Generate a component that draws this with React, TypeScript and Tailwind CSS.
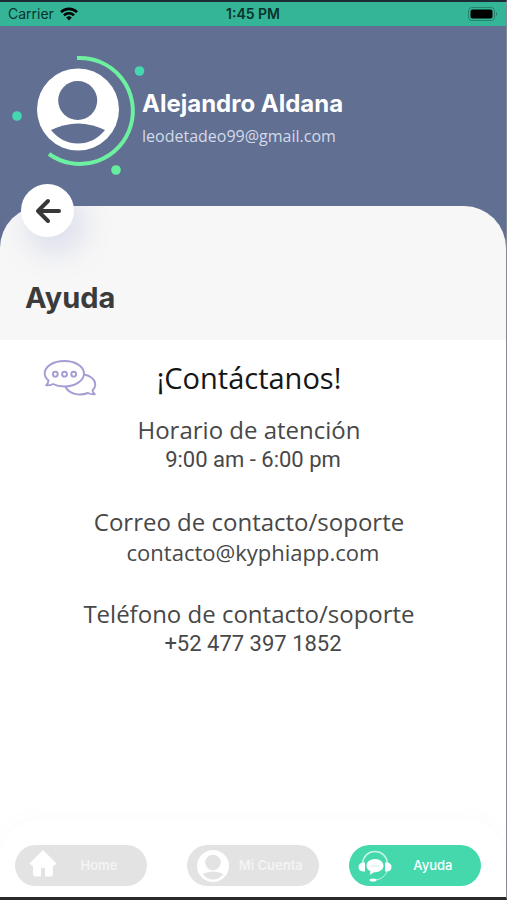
import type { ReactNode } from "react";

type ContactEntry = { label: string; value: string; href?: string; className: string };

const entries: ContactEntry[] = [
  {
    label: "Horario de atención",
    value: "9:00 am - 6:00 pm",
    className: "font-[Roboto,sans-serif]",
  },
  {
    label: "Correo de contacto/soporte",
    value: "contacto@kyphiapp.com",
    href: "mailto:contacto@kyphiapp.com",
    className: "font-['Open_Sans',sans-serif]",
  },
  {
    label: "Teléfono de contacto/soporte",
    value: "+52 477 397 1852",
    href: "tel:+524773971852",
    className: "font-[Roboto,sans-serif]",
  },
];

function StatusBar() {
  return (
    <div className="grid h-6 grid-cols-3 items-center bg-[#35b597] px-2 text-sm text-[#08332c]">
      <div className="flex items-center gap-1.5">
        <span>Carrier</span>
        <svg width="18" height="14" viewBox="0 0 18 14" fill="none" stroke="#000" strokeWidth="2.6">
          <path d="M1 5.2a11.3 11.3 0 0 1 16 0" />
          <path d="M4 8.4a7 7 0 0 1 10 0" />
          <path d="M9 13.4 6.2 10.6a4 4 0 0 1 5.6 0Z" fill="#000" stroke="none" />
        </svg>
      </div>
      <span className="text-center font-semibold">1:45 PM</span>
      <svg className="justify-self-end" width="30" height="14" viewBox="0 0 30 14">
        <rect x="0.5" y="0.5" width="26" height="13" rx="3.5" fill="none" stroke="#26836e" />
        <rect x="2.5" y="2.5" width="22" height="9" rx="2" fill="#000" />
        <path d="M28 5v4c1.6-.6 1.6-3.4 0-4Z" fill="#26836e" />
      </svg>
    </div>
  );
}

function Avatar() {
  return (
    <svg className="shrink-0 overflow-visible" width="126" height="128" viewBox="12 50 126 128">
      <path d="M77 58A53 53 0 1 1 49 154" fill="none" stroke="#6df0a0" strokeWidth="4" />
      <circle cx="78" cy="109.5" r="41" fill="#fff" />
      <circle cx="77.7" cy="100.5" r="19.5" fill="#617092" />
      <path d="M51 130Q78 117 105 130Q94 143.500 78 143.500T51 130Z" fill="#617092" />
      <circle cx="139.500" cy="71" r="4.800" fill="#45d8b0" />
      <circle cx="17" cy="116" r="4.800" fill="#45d8b0" />
      <circle cx="116" cy="170" r="4.800" fill="#66ee9f" />
    </svg>
  );
}

function ChatIcon() {
  return (
    <svg
      width="54"
      height="38"
      viewBox="43 358 54 38"
      fill="none"
      stroke="#a69bd3"
      strokeWidth="1.9"
      strokeLinejoin="round"
    >
      <path d="M48.500 379.500C46 377.500 44.700 375 44.700 372.500C44.700 365.500 53.300 360 64.300 360S84 365.500 84 372.500S75.300 385.500 64.300 385.500C59.800 385.500 56 384.600 53 383C51 384.100 48.500 384.600 46.200 384.300C47.600 383 48.300 381.300 48.500 379.500Z" />
      <path d="M84 373.500C90.500 374.500 95.300 378.800 95.300 383.500C95.300 385.700 94.300 387.800 92.500 389.500C92.600 391 93.500 392.200 94.700 393.300C92.200 393.500 90 393 88 392C79.500 395.300 68.500 393 65.500 385.700" />
      <circle cx="55.300" cy="373.200" r="2.400" />
      <circle cx="64.500" cy="373.200" r="2.400" />
      <circle cx="73.700" cy="373.200" r="2.400" />
    </svg>
  );
}

function HomeIcon() {
  return (
    <svg className="mb-1.5 ml-1" width="28" height="28" viewBox="0 0 28 28" fill="#fff">
      <path d="M14 1.500 27 14.500 25 16.500 23.500 15.500V25.500Q23.500 27 22 27H16.500V20Q16.500 18 14 18T11.500 20V27H6Q4.500 27 4.500 25.500V15.500L3 16.500 1 14.500Z" stroke="#fff" strokeLinejoin="round" />
    </svg>
  );
}

function AccountIcon() {
  return (
    <svg width="32" height="32" viewBox="0 0 32 32">
      <circle cx="16" cy="16" r="16" fill="#fff" />
      <circle cx="16" cy="12.500" r="7.800" fill="#e3e3e3" />
      <path d="M5.500 24Q16 19 26.500 24Q22 29.500 16 29.500T5.500 24Z" fill="#e3e3e3" />
    </svg>
  );
}

function SupportIcon() {
  return (
    <svg width="34" height="32" viewBox="0 0 34 32" fill="#fff">
      <path d="M4.500 13C5.500 6 10.500 1.500 17 1.500S28.500 6 29.500 13" fill="none" stroke="#c5f4e4" strokeWidth="1.500" />
      <path d="M29 21C27.500 26 23 29.500 17 30" fill="none" stroke="#c5f4e4" />
      <path d="M7 12.500v9H5q-4.500-.5-4.500-4.500T5 12.500ZM27 12.500v9h2q4.500-.5 4.500-4.500T29 12.500Z" />
      <path d="M17 9c-5 0-8.500 3-8.500 6.800 0 2.500 1.600 4.500 4 5.500l-.8 3.500 4.500-2.600c5.200.3 9.300-2.500 9.300-6.400C25.500 12 22 9 17 9Z" />
      <path d="M12.500 16h9" stroke="#a5ebd4" strokeDasharray="1.500 1" fill="none" />
      <ellipse cx="15" cy="30" rx="3.500" ry="1.500" />
    </svg>
  );
}

function NavButton({ icon, label, active = false }: { icon: ReactNode; label: string; active?: boolean }) {
  return (
    <button
      type="button"
      aria-current={active ? "page" : undefined}
      className={`flex h-[41px] w-[132px] items-center rounded-full px-2 text-[13px] ${
        active ? "bg-[#45d8ad] font-medium text-white" : "bg-[#e3e3e3] font-semibold text-[#f4f4f4]"
      }`}
    >
      <span className="flex w-9 shrink-0 justify-center">{icon}</span>
      <span className="flex-1 text-center whitespace-nowrap">{label}</span>
    </button>
  );
}

export default function App() {
  return (
    <div className="flex min-h-screen flex-col border-t-2 border-r border-b-3 border-t-[#1d2b36] border-r-[#858b95] border-b-[#2b2b2b] bg-white font-[Inter,sans-serif]">
      <StatusBar />

      <header className="bg-[#617092]">
        <div className="flex items-center gap-1 px-3 pt-6 pb-7">
          <Avatar />
          <div className="min-w-0 pt-3">
            <p className="text-2xl leading-8 font-bold text-white">Alejandro Aldana</p>
            <p className="font-['Open_Sans',sans-serif] text-base leading-8 text-[#d3dae9]">
              leodetadeo99@gmail.com
            </p>
          </div>
        </div>

        {/* Title sheet, back button sits over its top edge */}
        <div className="relative rounded-t-[42px] bg-[#f7f7f7] px-[25px] pt-[74px] pb-6">
          <button
            type="button"
            aria-label="Volver"
            className="absolute -top-[22px] left-[21px] flex size-[53px] items-center justify-center rounded-full bg-white shadow-[8px_14px_32px_rgba(98,112,190,0.22)]"
          >
            <svg width="26" height="26" viewBox="0 0 26 26" fill="none" stroke="#383838" strokeWidth="4" strokeLinecap="round" strokeLinejoin="round">
              <path d="M13 3 3 13l10 10M3.500 13H24" />
            </svg>
          </button>
          <h1 className="text-[29px] leading-9 font-bold text-[#3b3b3b]">Ayuda</h1>
        </div>
      </header>

      <main className="flex-1 pt-[19px] pr-2">
        <div className="grid grid-cols-[1fr_auto_1fr] items-center">
          <div className="pl-[43px]">
            <ChatIcon />
          </div>
          <h2 className="font-['Open_Sans',sans-serif] text-[29px] leading-9 text-[#161616]">¡Contáctanos!</h2>
        </div>

        <dl className="mt-[18px] flex flex-col gap-8 text-center text-[22px] leading-[30px] text-[#484848]">
          {entries.map((entry) => (
            <div key={entry.label}>
              <dt className="font-['Open_Sans',sans-serif] text-2xl leading-[30px]">{entry.label}</dt>
              <dd className={`pl-2 ${entry.className}`}>
                {entry.href ? <a href={entry.href}>{entry.value}</a> : entry.value}
              </dd>
            </div>
          ))}
        </dl>
      </main>

      <nav className="grid grid-cols-[35fr_33fr_32fr] rounded-t-[40px] bg-white pt-[25px] pb-[11px] pl-[15px] shadow-[0_-4px_24px_rgba(0,0,0,0.02)]">
        <NavButton icon={<HomeIcon />} label="Home" />
        <NavButton icon={<AccountIcon />} label="Mi Cuenta" />
        <NavButton icon={<SupportIcon />} label="Ayuda" active />
      </nav>
    </div>
  );
}
